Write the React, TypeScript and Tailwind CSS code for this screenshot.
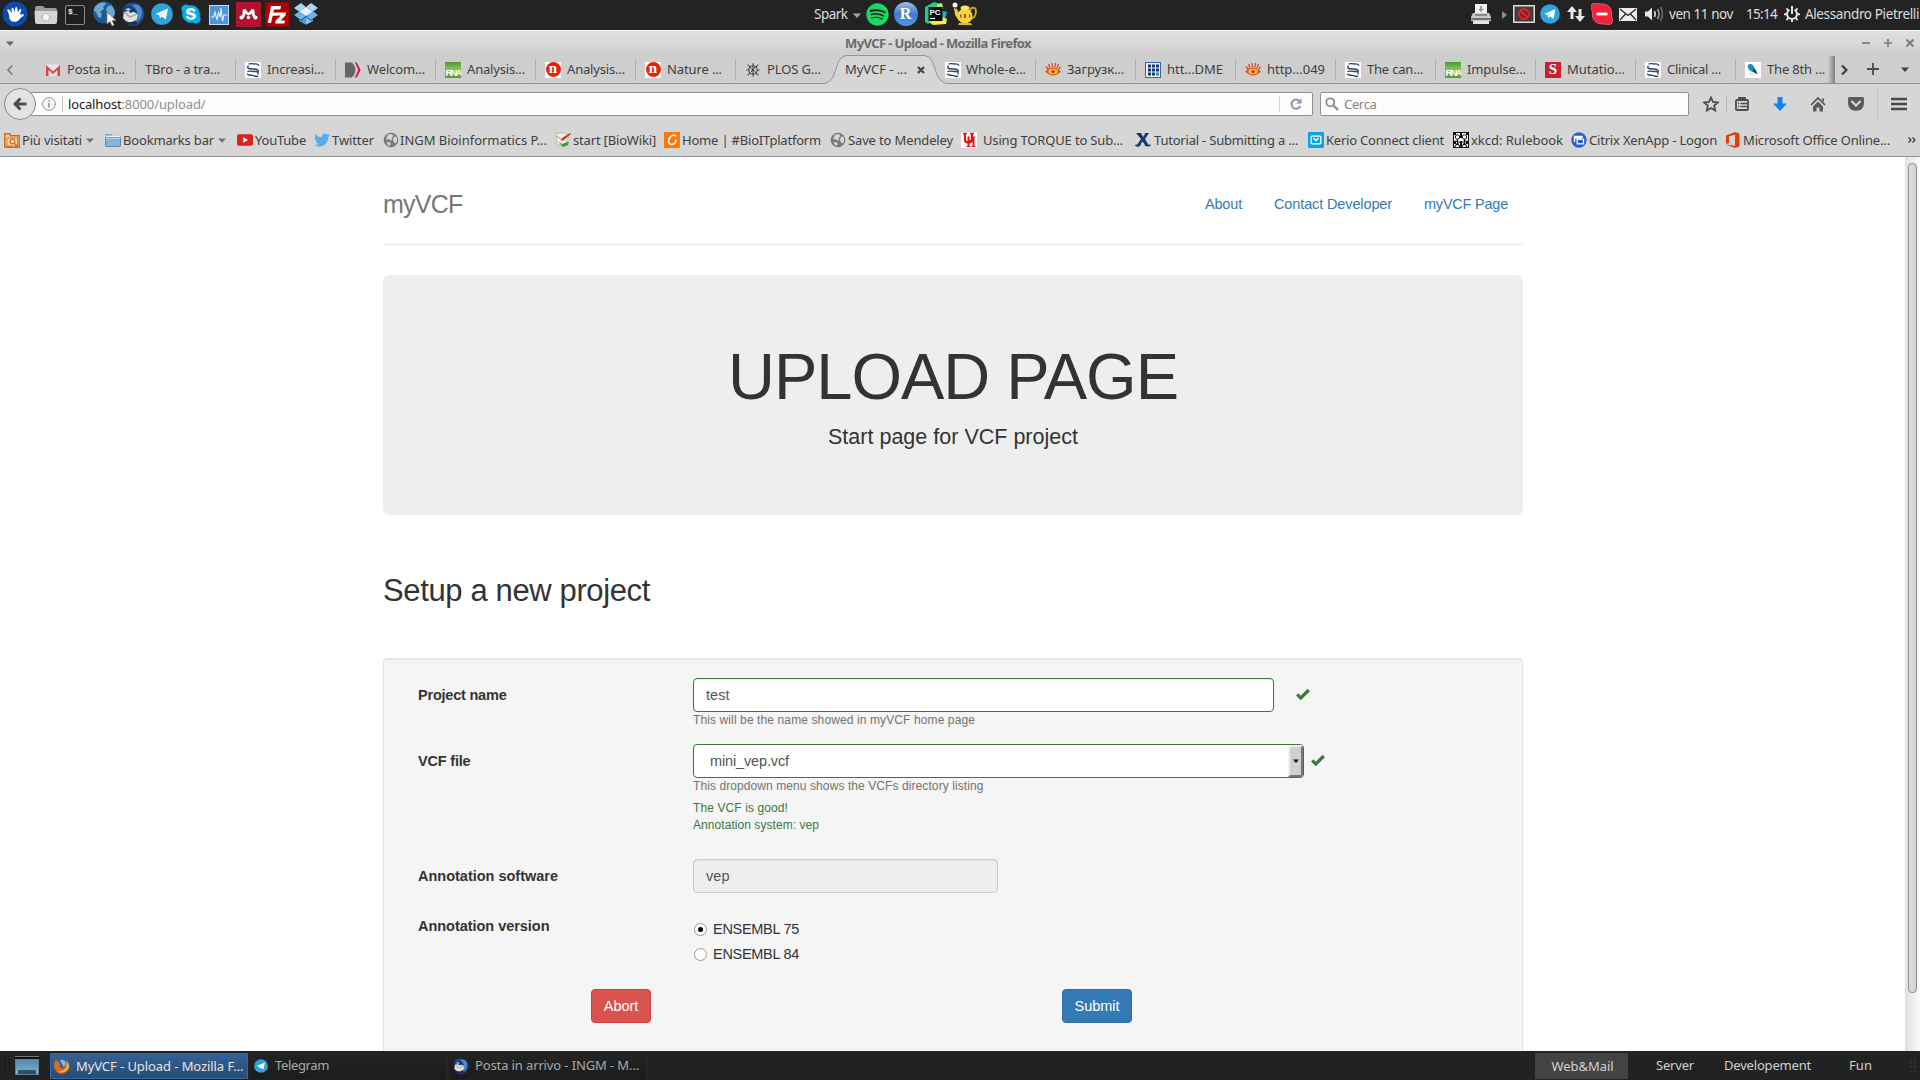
import React, { useLayoutEffect, useRef, useState } from "react";
import { FaSkype, FaSpotify, FaTwitter } from "react-icons/fa";

/** Single-line label whose tracking is adjusted so that it spans `w` pixels. */
function Fit({ w, children, className = "" }: { w: number; children: string; className?: string }) {
  const ref = useRef<HTMLSpanElement>(null);
  const [spacing, setSpacing] = useState(0);
  useLayoutEffect(() => {
    const el = ref.current;
    if (el) setSpacing((w - el.getBoundingClientRect().width) / children.length);
  }, [w, children]);
  return (
    <span ref={ref} className={"inline-block shrink-0 whitespace-pre " + className} style={{ letterSpacing: spacing }}>
      {children}
    </span>
  );
}

type IconProps = { className?: string };

const Telegram = ({ className = "size-[22px]" }: IconProps) => (
  <svg viewBox="0 0 22 22" className={className}>
    <circle cx="11" cy="11" r="10.800" fill="#2fa3dc" />
    <path d="M4.500 11 17 5.500 14.800 16.500 10.800 13.600 9 15.400 8.400 12.200z" fill="#fff" />
    <path d="M8.600 12.200 14.500 8 10 12.800z" fill="#b9dcf0" />
  </svg>
);

const Thunderbird = ({ className = "size-6" }: IconProps) => (
  <svg viewBox="0 0 24 24" className={className}>
    <path d="M2 6C6-1 18-1 22 7c3 7 0 13-6 16-5 2-10 0-13-4 1-4-3-8-1-13z" fill="#20509b" />
    <path d="M11 3c6-2 10 2 10 7s-2 8-5 10c2-6 1-12-5-17z" fill="#4d8bcc" />
    <path d="M3 10l9-2 5 5-2 7-8 1-5-5z" fill="#e4e0da" />
    <path d="M3 10l6 5 7-3" fill="none" stroke="#9a9fae" strokeWidth="1.300" />
    <path d="M1 8c2-4 7-5 10-3 3 1 5 4 5 6l-4-1-3 1-2-3-6 2z" fill="#173a78" />
    <path d="M4 7l4-1 2 2-3 1z" fill="#a8c3e2" />
    <path d="M2 17c4 4 9 4 13 1l1 4c-5 2-11 1-14-5z" fill="#13305f" />
  </svg>
);

const Firefox = () => (
  <svg viewBox="0 0 16 16" className="size-4">
    <circle cx="8.500" cy="7.500" r="6.500" fill="#2c5fa8" />
    <path d="M6 2c3-1 6 1 6 4 0 2-2 2-2 4z" fill="#7fb6e6" />
    <path d="M2 1c0 2 2 2 3 3C4 5 5 6 7 6 5 7 5 9 7 10s4 0 5-1c1-3 0-5-1-7 4 2 6 7 3 10.500S5 17 2 13 0 5 2 1z" fill="#e8681c" />
    <path d="M13 3c3 4 2 8-1 10s-6 2-8 0c4 1 7-1 8-4 1-2 1-4 1-6z" fill="#f7b23c" />
  </svg>
);

const Xubuntu = () => (
  <svg viewBox="0 0 26 26" className="size-[26px]">
    <circle cx="13" cy="13" r="12.500" fill="#0a4bb0" />
    <path d="M5.500 10c-1-1.500 1-2.500 2-1l2.500 3c0-1.500-1.200-5 .3-5.300 1.500-.4 2 3.800 2.700 4.800 0-1.300-.4-5.500 1.200-5.500s1.600 4.500 1.600 5.700c.6-1 1.700-4.300 3-3.700 1.400.7-.8 4-.8 5.500 1 .3 4-.9 4 .5 0 1.300-3 2-4.300 4-1.400 2.200-3.600 3.200-6.200 2.700-3.800-.7-4.400-3.500-4.200-6z" fill="#fff" />
  </svg>
);

const FolderHome = () => (
  <svg viewBox="0 0 24 20" className="h-5 w-6">
    <path d="M1 3q0-2 2-2h6l2 2h10q2 0 2 2v12H1z" fill="#9b9b9b" />
    <path d="M.5 6h23l-.5 11q0 2-2 2H3q-2 0-2-2z" fill="#d4d4d4" />
    <path d="M12 8l-4.500 4H9v3.500h6V12h1.500z" fill="#f7f7f7" stroke="#a5a5a5" strokeWidth=".6" />
  </svg>
);

const Terminal = () => (
  <div className="flex size-5 items-start rounded-[2px] border border-[#8b8b8b] bg-[#1e1e1e] pl-[2px] font-['Liberation_Mono'] text-[8px] leading-[12px] font-bold text-[#eee]">
    $_
  </div>
);

const Globe = () => (
  <svg viewBox="0 0 24 26" className="h-[26px] w-6">
    <circle cx="11" cy="11.500" r="11" fill="#1c5c94" />
    <path d="M4 4c3-3 8-3 9-1l-3 3 1 2-4 3 2 2-1 4-3-1-2-5-2-1c0-3 1-5 3-6zM14 6l4-2c3 3 4 6 4 9l-3 4-2-1-1-4-3-2z" fill="#6ea7cf" />
    <path d="M14 11v12l3-2.500 2 4.500 2.200-1-2-4.500h3.800z" fill="#f3f3f3" stroke="#777" strokeWidth=".6" />
  </svg>
);

const Monitor = () => (
  <svg viewBox="0 0 20 20" className="size-5">
    <rect x=".5" y=".5" width="19" height="19" fill="#4d94d8" stroke="#c5dcf3" />
    <path d="M2 12h2.500l1.500-5 2 8 1.500-7 1.500 4 1-9 1.500 13 1.500-6H18" fill="none" stroke="#e4f1ff" strokeWidth="1.100" />
  </svg>
);

const Mendeley = () => (
  <svg viewBox="0 0 25 25" className="size-[25px]">
    <rect width="25" height="25" fill="#b2122b" />
    <path d="M5.500 15.500C9 14 7.500 10 8.500 9.500S11 12 12.500 12s2.500-2.500 4-2.500-.5 4.500 3 6" fill="none" stroke="#fff" strokeWidth="2.800" strokeLinecap="round" />
    <circle cx="5.500" cy="15.500" r="2" fill="#fff" />
    <circle cx="19.500" cy="15.500" r="2" fill="#fff" />
    <circle cx="8.500" cy="9" r="2.100" fill="#fff" />
    <circle cx="16.500" cy="9" r="2.100" fill="#fff" />
    <circle cx="12.500" cy="15.500" r="1.700" fill="#fff" />
  </svg>
);

const Filezilla = () => (
  <svg viewBox="0 0 25 25" className="size-[25px]">
    <rect x=".5" y=".5" width="24" height="24" fill="#b40000" stroke="#8a0000" strokeDasharray="2 1.500" />
    <path d="M6 4h10l-.7 3.500H9l-.6 3h5l-.7 3.200h-5L6 21H2.800zM12 10.500h9l-.5 3-5 5h4.500l-.7 3h-9l.5-3 5-5h-4.400z" fill="#fff" />
  </svg>
);

const Dropbox = () => (
  <svg viewBox="0 0 24 22" className="h-[22px] w-6">
    <path d="M7 0l5 4-7 4.500L0 5zM17 0l7 5-5 3.500L12 4z" fill="#a8d4f5" />
    <path d="M0 12l5-3.500L12 13l-5 4zM24 12l-5-3.500L12 13l5 4z" fill="#6db3ec" />
    <path d="M12 4l7 4.500L12 13 5 8.500z" fill="#e7f4fd" />
    <path d="M5 16.500l2 1.300 5-4v8L5 18z" fill="#4a9be0" />
    <path d="M19 16.500l-2 1.300-5-4v8l7-3.800z" fill="#84c0ef" />
  </svg>
);

const Skype = () => (
  <span className="relative flex size-[22px] items-center justify-center">
    <span className="absolute size-[15px] rounded-full bg-white" />
    <FaSkype className="relative size-[22px] text-[#00aff0]" />
  </span>
);

const RLogo = () => (
  <div className="flex size-6 items-center justify-center rounded-full bg-linear-to-b from-[#9cc0ea] via-[#3f7cd0] to-[#4f97e8] font-['Liberation_Serif'] text-[16px] leading-none font-bold text-white">
    R
  </div>
);

const PyCharm = () => (
  <svg viewBox="0 0 24 24" className="size-6">
    <path d="M1 5l9-5 9 3-4 12-11 7-3-2z" fill="#22c98b" />
    <path d="M13 2l5-1 1 6-6 2z" fill="#c9e84d" />
    <path d="M15 8l8 2-3 10-9 2z" fill="#19b6d8" />
    <path d="M5 20l14-5 4 2-1 5-13 1z" fill="#f5ee3f" />
    <rect x="4.500" y="5" width="14" height="14" fill="#0b0b0b" />
    <text x="5.500" y="12.500" fontFamily="Liberation Sans" fontWeight="700" fontSize="8" fill="#fff">PC</text>
    <path d="M6 16.500h5" stroke="#fff" strokeWidth="1.200" />
  </svg>
);

const Teapot = () => (
  <svg viewBox="0 0 25 24" className="h-6 w-[25px]">
    <circle cx="3" cy="3" r="2.500" fill="#f4f4f4" />
    <path d="M2 6l3 1 3 6-1 6-4-6z" fill="#e9c63a" />
    <path d="M18 9c1-5 6-4 6 0s-2 7-5 8" fill="none" stroke="#d9a91d" strokeWidth="1.800" />
    <ellipse cx="13" cy="14" rx="7.500" ry="7.500" fill="#f5d63a" />
    <ellipse cx="13" cy="6" rx="4.500" ry="2.500" fill="#f9e26b" />
    <path d="M7 21h12l1 2H6z" fill="#e3b822" />
    <path d="M8 12.500h1.500v3H8zM12 12h2v4h-2zM17 12.500h1.300v3H17z" fill="#d8371d" />
  </svg>
);

const Printer = () => (
  <svg viewBox="0 0 20 20" className="size-5">
    <rect x="4" y="0" width="12" height="10" fill="#f1f1f1" />
    <path d="M9 2h2v3h2l-3 3-3-3h2z" fill="#9a9a9a" />
    <path d="M2 9h16l2 4v4H0v-4z" fill="#c9c9c9" />
    <path d="M0 14h20v2H0z" fill="#737373" />
    <path d="M2 17h16v3H2z" fill="#e6e6e6" />
    <path d="M4 11h12" stroke="#6b6b6b" strokeWidth="1.400" />
  </svg>
);

const Blocked = () => (
  <svg viewBox="0 0 22 18" className="h-[18px] w-[22px]">
    <rect x=".75" y=".75" width="20.500" height="16.500" fill="#4a3c3d" stroke="#dcdcdc" strokeWidth="1.500" />
    <circle cx="11" cy="9" r="4.900" fill="#8d1a1c" stroke="#cf2b2c" strokeWidth="2.200" />
    <path d="M7.800 6l6.400 6" stroke="#cf2b2c" strokeWidth="2" />
  </svg>
);

const Arrows = () => (
  <svg viewBox="0 0 18 18" className="size-[18px]">
    <path d="M5 1L0 7h3.500v7h3V7H10zM13 17l5-6h-3.500V4h-3v7H8z" fill="#e8e8e8" />
  </svg>
);

const SkypeBusy = () => (
  <svg viewBox="0 0 22 22" className="size-[22px]">
    <path d="M1 1c4-2 6 0 9 0 8-.5 11 5 10.500 10 0 3 2 5 .5 9-3 3-5 1-9 1C4 21 1 16 1.500 11 1.500 7-1 5 1 1z" fill="#ef233c" stroke="#f7687a" strokeWidth=".8" />
    <path d="M5.500 11h11" stroke="#fff" strokeWidth="2.800" />
  </svg>
);

const Mail = () => (
  <svg viewBox="0 0 18 13" className="h-[13px] w-[18px]">
    <rect width="18" height="13" fill="#ededed" />
    <path d="M1 1l8 6.500L17 1M1 12l5.500-6M17 12l-5.500-6" fill="none" stroke="#222" strokeWidth="1.200" />
  </svg>
);

const Volume = () => (
  <svg viewBox="0 0 19 16" className="h-4 w-[19px]">
    <path d="M0 5.500h3L7 1.500v13l-4-4H0z" fill="#e8e8e8" />
    <path d="M9.500 5q1.500 3 0 6" fill="none" stroke="#e8e8e8" strokeWidth="1.600" />
    <path d="M12.500 3q3 5 0 10" fill="none" stroke="#9d9d9d" strokeWidth="1.600" />
    <path d="M15.500 1q4 7 0 14" fill="none" stroke="#6a6a6a" strokeWidth="1.600" />
  </svg>
);

const PowerGear = () => (
  <svg viewBox="0 0 16 16" className="size-4">
    <g fill="none" stroke="#e8e8e8" strokeWidth="1.900">
      <path d="M5.500 3.700a5 5 0 1 0 5 0M8 0v8" />
      <path d="M2.500 2.500l1.600 1.600M13.500 2.500l-1.600 1.600M0 8.300h3M13 8.300h3M2.500 14l1.700-1.800M13.500 14l-1.700-1.800M8 13v3" />
    </g>
  </svg>
);

/* ---------- tab favicons ---------- */

const Gmail = () => (
  <svg viewBox="0 0 16 16" className="size-4">
    <rect x="1" y="2.500" width="14" height="11.500" fill="#e9e6e4" />
    <path d="M1 14V3l7 6.500L15 3v11h-2.500V8L8 12 3.500 8v6z" fill="#d6463a" />
  </svg>
);
const Springer = () => (
  <svg viewBox="0 0 16 16" className="size-4 bg-white">
    <g fill="none" stroke="#27406e" strokeLinecap="round">
      <path d="M4 2C6 .8 7 2.200 9.500 2s3-.5 4.300 1.200" strokeWidth="1.300" />
      <path d="M3 4.200C2 6.500 4 6.800 7 7s6-.2 6.300 2.300" strokeWidth="1.500" />
      <path d="M3 9.300c3-.6 4.500.3 7 .2s3.600.8 3 2.500" strokeWidth="1.300" />
      <path d="M2.500 12.200c1 1.600 3 .8 5 1.200s2.800 1.500 5 .9" strokeWidth="1.400" />
    </g>
  </svg>
);
const Welcome = () => (
  <svg viewBox="0 0 17 16" className="h-4 w-[17px]">
    <path d="M0 0h7q4 3 4 8t-4 8H0z" fill="#636569" />
    <path d="M10.500 0H12.500l4 8-4 8h-2l3.700-8z" fill="#d3103f" />
  </svg>
);
const Rna = () => (
  <div className="flex size-4 items-end justify-center overflow-hidden bg-linear-to-b from-[#4f9a35] via-[#8cc862] to-[#4f9a35] font-['Liberation_Sans'] text-[9.500px] leading-[10px] font-bold tracking-[-1.800px] text-white">
    RNA
  </div>
);
const NatureN = () => (
  <div className="flex size-4 items-center justify-center bg-white">
    <div className="flex size-[15px] items-center justify-center rounded-full bg-[#e2230d] pb-[2px] font-['Liberation_Serif'] text-[15px] leading-none font-bold text-white">n</div>
  </div>
);
const PlosBug = () => (
  <svg viewBox="0 0 16 16" className="size-4">
    <g stroke="#222" fill="none" strokeWidth=".9">
      <circle cx="8" cy="8" r="4.200" />
      <path d="M5.500 6l5 4M6 10l4-5M8 4v8" strokeWidth=".8" />
      <path d="M8 3.500V1M8 12.500V15M3.500 8H1M12.500 8H15M5 5L2.500 2.500M11 5l2.500-2.500M5 11l-2.500 2.500M11 11l2.500 2.500" strokeWidth="1.200" strokeDasharray="1.200 .8" />
    </g>
  </svg>
);
const EyeIcon = () => (
  <svg viewBox="0 0 16 16" className="size-4">
    <path d="M1 4.500l2.500 3M3.500 2l1.500 4M7 1l.5 4M10.500 1L10 5M13.500 2L12 6M15.500 4.500L13.500 7.500" stroke="#d8472b" strokeWidth="1.300" />
    <path d="M0 9.500q8-8 16 0-8 8-16 0z" fill="#e0542a" />
    <ellipse cx="8" cy="9.500" rx="4.600" ry="2.800" fill="#f7c52e" />
    <circle cx="8" cy="9.500" r="1.600" fill="#b5281a" />
  </svg>
);
const GridIcon = () => (
  <svg viewBox="0 0 16 16" className="size-4">
    <rect x=".5" y=".5" width="15" height="15" fill="#e9eef4" stroke="#3b62ad" />
    <path d="M3 2.500h3v3H3zM7 2.500h3v3H7zM11 2.500h3v3h-3zM3 6.500h3v3H3zM7 6.500h3v3H7zM11 6.500h3v3h-3zM3 10.500h3v3H3zM7 10.500h3v3H7z" fill="#173a70" />
    <path d="M11 10.500h3v3h-3z" fill="#1aa08d" />
  </svg>
);
const ScienceS = () => (
  <div className="flex size-4 items-center justify-center bg-[#c8202d] font-['Liberation_Serif'] text-[15px] leading-none font-bold text-white">S</div>
);
const Bird = () => (
  <svg viewBox="0 0 16 16" className="size-4 bg-white">
    <path d="M3 3c2-2 5-1 6 2l2 4-3 1C5 9 2 6 3 3z" fill="#138bc4" />
    <path d="M8 6.500l3 1.500 1.500 4.500L8 10z" fill="#0c5b53" />
    <path d="M4 11l4 2" stroke="#d5e7ef" strokeWidth="1.500" />
  </svg>
);

/* ---------- bookmark icons ---------- */

const MostVisited = () => (
  <svg viewBox="0 0 16 16" className="size-4">
    <path d="M.7 1.700h5l1.300 2h8.300v11.600H.7z" fill="#f4c48d" stroke="#d2691e" strokeWidth="1.400" />
    <rect x="3" y="6" width="10.500" height="8" fill="#fbe3c6" stroke="#d2691e" strokeWidth=".9" />
    <circle cx="8.500" cy="9.500" r="2.400" fill="none" stroke="#d2691e" strokeWidth="1.300" />
    <path d="M10 11l3 3" stroke="#d2691e" strokeWidth="1.400" />
  </svg>
);
const BlueFolder = () => (
  <svg viewBox="0 0 16 16" className="size-4">
    <path d="M.5 2h6l1 1.500h8v10H.5z" fill="#7d98ad" />
    <rect x="1" y="3.500" width="14" height="3" fill="#e9eff3" />
    <rect x=".5" y="5.500" width="15" height="9" rx=".8" fill="#86b4d6" stroke="#52789a" strokeWidth=".8" />
    <path d="M1 6.200h14" stroke="#c2dcee" />
  </svg>
);
const GreyGlobe = () => (
  <svg viewBox="0 0 16 16" className="size-4">
    <circle cx="8" cy="8" r="6.800" fill="#7d7d7d" stroke="#6e6e6e" />
    <path d="M5 2.500l4-.5 1.500 2L8.500 6l1 1.500-2 1-2-1.500-2.500.5zM11 5l2.500-.5.8 3.500-1.300 3.500-2-1-1-3zM3.500 10l4 .5-.5 3.500-2-1z" fill="#d7d7d7" />
  </svg>
);
const Wiki = () => (
  <svg viewBox="0 0 16 16" className="size-4">
    <path d="M1 1h9l4 3-5 11-7-3z" fill="#f0efdf" stroke="#a5b58b" strokeWidth=".7" />
    <path d="M15 1L7 6 6 9l3-1 7-6z" fill="#c43b2b" />
    <path d="M3 9.500l4 2.500 7-2.500-1 3.500-5 2z" fill="#3f9b3c" />
    <path d="M2 4l5 4" stroke="#d58a6a" />
  </svg>
);
const OrangeC = () => (
  <svg viewBox="0 0 16 16" className="size-4">
    <rect width="16" height="16" fill="#fd7a0a" />
    <path d="M12 4C8.500 2 4.500 5 4.500 9.500c.5 4.500 7 3.500 7.500-1.500" fill="none" stroke="#fff" strokeWidth="1.500" strokeLinecap="round" />
  </svg>
);
const UH = () => (
  <svg viewBox="0 0 16 16" className="size-4 bg-white">
    <g fill="none" stroke="#e31414">
      <path d="M4 1.500V8q0 2.500 3.500 2.500T11 8V1.500" strokeWidth="2.200" />
      <path d="M2 1.500h4M9 1.500h4" strokeWidth="1.400" />
      <path d="M7.500 4.500v10M12.500 5v9.500M7.500 9h5" strokeWidth="1.900" />
      <path d="M5.500 14.500h4M10.500 14.500h4M11.500 5h3" strokeWidth="1.200" />
    </g>
  </svg>
);
const XIcon = () => (
  <svg viewBox="0 0 16 16" className="size-4">
    <path d="M1 1h5l2.200 4L10 2l-.5-1H14l-4 6 3.500 6H10L7.500 9.500 5 13H2l4-6z" fill="#1b3768" />
    <path d="M.5 13q3 2 5-1M10 12.500q2.500 2 5.500.5" stroke="#1b3768" strokeWidth="1.700" fill="none" />
  </svg>
);
const Kerio = () => (
  <svg viewBox="0 0 16 16" className="size-4">
    <rect width="16" height="16" rx="1" fill="#0aa4e6" />
    <rect x="3.200" y="4.200" width="9.600" height="7.600" rx=".8" fill="none" stroke="#fff" strokeWidth="1.300" />
    <path d="M5.500 6L8 8.700 10.500 6" fill="none" stroke="#fff" strokeWidth="1.300" />
  </svg>
);
const Xkcd = () => (
  <svg viewBox="0 0 16 16" className="size-4">
    <rect x=".5" y=".5" width="15" height="15" fill="#fff" stroke="#111" />
    <path d="M0 0h3v3H0zM7 0h2v6H7zM13 0h3v3h-3zM7 9h2v7H7zM1 9h2v3H1zM13 9h2v3h-2z" fill="#111" />
    <circle cx="4.500" cy="5" r="2.200" fill="#fff" stroke="#111" />
    <circle cx="11.500" cy="5" r="2.200" fill="#fff" stroke="#111" />
    <path d="M4.500 7v4l-3 4M4.500 11l2.500 4M11.500 7v4l-3 4M11.500 11l2.500 4M2 9l5 1M9 10l5-1" stroke="#111" fill="none" strokeWidth="1.200" />
  </svg>
);
const Citrix = () => (
  <svg viewBox="0 0 16 16" className="size-4">
    <circle cx="8" cy="8" r="7.700" fill="#2a5ed0" />
    <path d="M3.500 10V4.500h7.500V6M3.500 6h7" fill="none" stroke="#fff" strokeWidth="1.300" />
    <rect x="6.200" y="7.200" width="6.300" height="4.600" fill="#2a5ed0" stroke="#fff" strokeWidth="1.300" />
  </svg>
);
const Office = () => (
  <svg viewBox="0 0 14 16" className="h-4 w-[14px]">
    <path d="M0 3.500L9 0l4.500 1.500v13L9 16 0 12.500l9 1.200V2.800L3 4.200v6.600l-3 1.500z" fill="#e04206" />
  </svg>
);

const YouTubeIcon = () => (
  <svg viewBox="0 0 16 16" className="size-4">
    <rect y="2.300" width="16" height="11.500" rx="2" fill="#d92323" />
    <path d="M6.300 5.300v5.400L11 8z" fill="#fff" />
  </svg>
);
const TwitterIcon = () => <FaTwitter className="size-4 text-[#55acee]" />;

const Caret = ({ className = "" }: IconProps) => (
  <svg viewBox="0 0 8 5" className={"h-[5px] w-2 " + className}>
    <path d="M0 .5h8L4 5z" fill="currentColor" />
  </svg>
);

type Tab = { icon?: React.ReactNode; text: string; w: number };

const tabsBefore: Tab[] = [
  { icon: <Springer />, text: "Increasi...", w: 57 },
  { icon: <Welcome />, text: "Welcom...", w: 58 },
  { icon: <Rna />, text: "Analysis...", w: 58 },
  { icon: <NatureN />, text: "Analysis...", w: 58 },
  { icon: <NatureN />, text: "Nature ...", w: 55 },
];
const tabsAfter: Tab[] = [
  { icon: <EyeIcon />, text: "Загрузк...", w: 57 },
  { icon: <GridIcon />, text: "htt...DME", w: 56 },
  { icon: <EyeIcon />, text: "http...049", w: 58 },
  { icon: <Springer />, text: "The can...", w: 56 },
  { icon: <Rna />, text: "Impulse...", w: 59 },
  { icon: <ScienceS />, text: "Mutatio...", w: 58 },
  { icon: <Springer />, text: "Clinical ...", w: 54 },
];

const TabItem = ({ t }: { t: Tab }) => (
  <div className="flex h-[22px] w-[100px] shrink-0 items-center border-l border-[#b0b0b0] pl-[9px]">
    {t.icon && <span className="mr-[6px] flex w-4 shrink-0">{t.icon}</span>}
    <Fit w={t.w} className="-mt-[2px]">{t.text}</Fit>
  </div>
);

const bookmarks: { box: string; gap: string; icon: React.ReactNode; text: string; w: number; menu?: boolean }[] = [
  { box: "w-[101px]", gap: "pl-[2px]", icon: <MostVisited />, text: "Più visitati", w: 60, menu: true },
  { box: "w-[132px]", gap: "pl-[2px]", icon: <BlueFolder />, text: "Bookmarks bar", w: 91, menu: true },
  { box: "w-[77px]", gap: "pl-[2px]", icon: <YouTubeIcon />, text: "YouTube", w: 51 },
  { box: "w-[69px]", gap: "pl-[2px]", icon: <TwitterIcon />, text: "Twitter", w: 42 },
  { box: "w-[172px]", gap: "pl-[1px]", icon: <GreyGlobe />, text: "INGM Bioinformatics P...", w: 147 },
  { box: "w-[109px]", gap: "pl-[2px]", icon: <Wiki />, text: "start [BioWiki]", w: 83 },
  { box: "w-[166px]", gap: "pl-[2px]", icon: <OrangeC />, text: "Home | #BioITplatform", w: 139 },
  { box: "w-[131px]", gap: "pl-[2px]", icon: <GreyGlobe />, text: "Save to Mendeley", w: 105 },
  { box: "w-[174px]", gap: "pl-[6px]", icon: <UH />, text: "Using TORQUE to Sub...", w: 140 },
  { box: "w-[173px]", gap: "pl-[3px]", icon: <XIcon />, text: "Tutorial - Submitting a ...", w: 144 },
  { box: "w-[145px]", gap: "pl-[2px]", icon: <Kerio />, text: "Kerio Connect client", w: 118 },
  { box: "w-[118px]", gap: "pl-[2px]", icon: <Xkcd />, text: "xkcd: Rulebook", w: 92 },
  { box: "w-[155px]", gap: "pl-[2px]", icon: <Citrix />, text: "Citrix XenApp - Logon", w: 128 },
  { box: "w-[181px]", gap: "pl-[3px]", icon: <Office />, text: "Microsoft Office Online...", w: 147 },
];

function TopPanel() {
  return (
    <div className="flex h-[30px] shrink-0 items-center bg-[#232323] pb-[2px] text-[13.500px] text-[#dedede]">
      <div className="flex w-[814px] items-center pl-[2px]">
        <span className="flex w-[32px]"><Xubuntu /></span>
        <span className="flex w-[31px] pt-[2px]"><FolderHome /></span>
        <span className="flex w-[28px] pt-[2px]"><Terminal /></span>
        <span className="flex w-[28px]"><Globe /></span>
        <span className="flex w-[30px]"><Thunderbird /></span>
        <span className="flex w-[29px]"><Telegram /></span>
        <span className="flex w-[29px]"><Skype /></span>
        <span className="flex w-[27px] pt-[2px]"><Monitor /></span>
        <span className="flex w-[29px]"><Mendeley /></span>
        <span className="flex w-[29px]"><Filezilla /></span>
        <Dropbox />
      </div>
      <Fit w={33.500}>Spark</Fit>
      <Caret className="mt-[3px] ml-[5px] text-[#a5a5a5]" />
      <FaSpotify className="ml-[5px] size-[23px] text-[#1ed760]" />
      <span className="ml-[5px] flex"><RLogo /></span>
      <span className="ml-[6px] flex"><PyCharm /></span>
      <span className="ml-[4px] flex"><Teapot /></span>
      <div className="ml-auto flex items-center">
        <span className="flex w-[31px]"><Printer /></span>
        <span className="flex w-[11px] pt-[2px]">
          <svg viewBox="0 0 5 8" className="h-2 w-[5px]"><path d="M0 0l5 4-5 4z" fill="#8c8c8c" /></svg>
        </span>
        <span className="flex w-[27px]"><Blocked /></span>
        <span className="flex w-[27px]"><Telegram className="size-[20px]" /></span>
        <span className="flex w-[24px]"><Arrows /></span>
        <span className="flex w-[28px]"><SkypeBusy /></span>
        <span className="flex w-[26px]"><Mail /></span>
        <span className="flex w-[24px]"><Volume /></span>
        <Fit w={64}>ven 11 nov</Fit>
        <Fit w={31} className="ml-[13px]">15:14</Fit>
        <span className="ml-[7px] flex w-[21px]"><PowerGear /></span>
        <Fit w={114} className="mr-px">Alessandro Pietrelli</Fit>
      </div>
    </div>
  );
}

function TitleBar() {
  return (
    <div className="flex h-[26px] shrink-0 items-center border-t border-[#f2f2f2] bg-linear-to-b from-[#e0e0e0] to-[#cecece] pb-[1px]">
      <Caret className="ml-[6px] text-[#666]" />
      <div className="w-[831px]" />
      <Fit w={186} className="text-[13px] font-bold text-[#6b6b6b]">MyVCF - Upload - Mozilla Firefox</Fit>
      <div className="mr-[6px] ml-auto flex items-center gap-[14px] text-[#7d7d7d]">
        <svg viewBox="0 0 8 8" className="size-2"><path d="M0 4h8" stroke="currentColor" strokeWidth="1.700" /></svg>
        <svg viewBox="0 0 8 8" className="size-2"><path d="M0 4h8M4 0v8" stroke="currentColor" strokeWidth="1.700" /></svg>
        <svg viewBox="0 0 8 8" className="size-2"><path d="M.5.5l7 7M7.500.5l-7 7" stroke="currentColor" strokeWidth="2" /></svg>
      </div>
    </div>
  );
}

function TabStrip() {
  return (
    <div className="flex h-[28px] shrink-0 items-center border-b border-[#929292] bg-[#cecece] text-[#404040]">
      <svg viewBox="0 0 6 10" className="ml-[7px] h-[10px] w-[6px]"><path d="M5.300.5L1 5l4.300 4.500" fill="none" stroke="#777" strokeWidth="1.500" /></svg>
      <div className="flex w-[122px] items-center pl-[32px]">
        <Gmail />
        <Fit w={58} className="-mt-[2px] ml-[6px]">Posta in...</Fit>
      </div>
      <div className="flex h-[22px] w-[100px] shrink-0 items-center border-l border-[#b0b0b0] pl-[9px]">
        <Fit w={75} className="-mt-[2px]">TBro - a tra...</Fit>
      </div>
      {tabsBefore.map((t, i) => <TabItem key={i} t={t} />)}
      <div className="flex h-[22px] w-[91px] shrink-0 items-center border-l border-[#b0b0b0] pl-[9px]">
        <PlosBug />
        <Fit w={54} className="-mt-[2px] ml-[6px]">PLOS G...</Fit>
      </div>
      <div className="relative flex h-[29px] w-[119px] shrink-0 items-center pl-[19px]">
        <svg viewBox="0 0 119 29" className="absolute inset-0 h-[29px] w-[119px]">
          <path d="M-3 29V28.500C14 28.500 6 .5 22 .5H97C113 .5 105 28.500 122 28.500V29z" fill="#d6d6d6" />
          <path d="M-3 28C14 28 6 .5 22 .5H97C113 .5 105 28 122 28" fill="none" stroke="#929292" />
        </svg>
        <Fit w={62} className="relative -mt-[2px]">MyVCF - ...</Fit>
        <svg viewBox="0 0 8 8" className="relative ml-[10px] size-2"><path d="M1 1l6 6M7 1L1 7" stroke="#4a4a4a" strokeWidth="2.300" /></svg>
      </div>
      <div className="flex h-[22px] w-[90px] shrink-0 items-center">
        <Springer />
        <Fit w={60} className="-mt-[2px] ml-[5px]">Whole-e...</Fit>
      </div>
      {tabsAfter.map((t, i) => <TabItem key={i} t={t} />)}
      <div className="flex h-[22px] w-[93px] shrink-0 items-center border-l border-[#b0b0b0] pl-[9px]">
        <Bird />
        <Fit w={58} className="-mt-[2px] ml-[6px]">The 8th ...</Fit>
      </div>
      <div className="h-[27px] w-[7px] shrink-0 bg-linear-to-r from-[#cecece] to-[#7f7f7f]" />
      <svg viewBox="0 0 7 10" className="ml-[6px] h-[10px] w-[7px]"><path d="M1 .5L5.500 5 1 9.500" fill="none" stroke="#3c3c3c" strokeWidth="2.200" /></svg>
      <svg viewBox="0 0 12 12" className="-mt-px ml-[19px] size-3"><path d="M6 0v12M0 6h12" stroke="#4a4a4a" strokeWidth="1.800" /></svg>
      <Caret className="ml-[22px] text-[#3c4043]" />
    </div>
  );
}

function NavBar() {
  return (
    <div className="flex h-[40px] shrink-0 items-center bg-[#d6d6d6] text-[#404040]">
      <div className="z-10 ml-[4px] flex size-8 items-center justify-center rounded-full border border-[#8a8a8a] bg-[#e2e2e2]">
        <svg viewBox="0 0 14 14" className="size-[14px]"><path d="M13.500 7H2.500M7.500 1.500L2 7l5.500 5.500" fill="none" stroke="#4d4d4d" strokeWidth="3" /></svg>
      </div>
      <div className="-ml-[6px] flex h-6 w-[1283px] items-center rounded-r-[2px] border border-[#8f8f8f] bg-[#fcfcfc] pl-[11px]">
        <svg viewBox="0 0 14 14" className="size-[14px]">
          <circle cx="7" cy="7" r="6.300" fill="none" stroke="#8c8c8c" />
          <path d="M7 6v4.500M7 3.300v1.500" stroke="#8c8c8c" strokeWidth="1.500" />
        </svg>
        <span className="ml-[6px] h-4 w-px bg-[#c4c4c4]" />
        <Fit w={53.500} className="ml-[5px] text-[#222]">localhost</Fit>
        <Fit w={84} className="text-[#8f8f8f]">:8000/upload/</Fit>
        <span className="ml-auto h-4 w-px bg-[#d2d2d2]" />
        <svg viewBox="0 0 12 12" className="mr-[10px] ml-[10px] size-3">
          <path d="M9.800 3.500A4.600 4.600 0 1 0 10.300 8" fill="none" stroke="#8898a8" strokeWidth="2" />
          <path d="M11.500 0v5.500H6z" fill="#8898a8" />
        </svg>
      </div>
      <div className="ml-[7px] flex h-6 w-[369px] items-center rounded-[2px] border border-[#8f8f8f] bg-[#fcfcfc] pl-[4px]">
        <svg viewBox="0 0 14 14" className="size-[14px]">
          <circle cx="5.300" cy="5.300" r="4" fill="none" stroke="#8f8f8f" strokeWidth="1.800" />
          <path d="M8.500 8.500l4.500 4.500" stroke="#8f8f8f" strokeWidth="2.400" />
        </svg>
        <Fit w={32.500} className="ml-[5px] text-[#858585]">Cerca</Fit>
      </div>
      <svg viewBox="0 0 16 16" className="ml-[14px] size-4">
        <path d="M8 1.500l2 4.500 4.800.5-3.600 3.200 1 4.800L8 12l-4.200 2.500 1-4.800L1.200 6.500 6 6z" fill="none" stroke="#4d4d4d" strokeWidth="1.800" />
      </svg>
      <span className="ml-[7px] h-[18px] w-px bg-[#b5b5b5]" />
      <svg viewBox="0 0 14 14" className="ml-[8px] size-[14px]">
        <path d="M4 3V1h6v2" fill="none" stroke="#4d4d4d" strokeWidth="1.800" />
        <rect x="1" y="3" width="12" height="10" rx="1" fill="none" stroke="#4d4d4d" strokeWidth="1.800" />
        <path d="M3 6.500h1.300M5.500 6.500H12M3 9.500h1.300M5.500 9.500H12" stroke="#4d4d4d" strokeWidth="1.400" />
      </svg>
      <svg viewBox="0 0 14 14" className="ml-[24px] size-[14px]"><path d="M4.500 0h5v6.500H14L7 14 0 6.500h4.500z" fill="#1483f2" /></svg>
      <svg viewBox="0 0 16 15" className="ml-[23px] h-[15px] w-4">
        <path d="M1 8l7-7 7 7" fill="none" stroke="#4d4d4d" strokeWidth="1.600" />
        <path d="M3 9.500L8 4.500l5 5v5H9.500v-4h-3v4H3zM12 1.500h2V5l-2-2z" fill="#5a5a5a" />
      </svg>
      <svg viewBox="0 0 16 14" className="ml-[22px] h-[14px] w-4">
        <path d="M0 1.500Q0 0 1.500 0h13Q16 0 16 1.500V6q0 7.500-8 7.800Q0 13.500 0 6z" fill="#5a5a5a" />
        <path d="M4 4.500l4 4 4-4" fill="none" stroke="#dcdcdc" strokeWidth="2" strokeLinecap="round" />
      </svg>
      <span className="ml-[13px] h-[32px] w-px bg-[#c2c2c2]" />
      <svg viewBox="0 0 16 14" className="ml-[13px] h-[14px] w-4"><path d="M0 2h16M0 7h16M0 12h16" stroke="#4a4a4a" strokeWidth="2.600" /></svg>
    </div>
  );
}

function BookmarksBar() {
  return (
    <div className="flex h-[33px] shrink-0 items-center border-b border-[#929292] bg-[#d6d6d6] pl-[4px] text-[#404040]">
      {bookmarks.map((b) => (
        <div key={b.text} className={"flex shrink-0 items-center " + b.box}>
          {b.icon}
          <span className={"flex " + b.gap}><Fit w={b.w}>{b.text}</Fit></span>
          {b.menu && <Caret className="ml-[4px] text-[#777]" />}
        </div>
      ))}
      <svg viewBox="0 0 8 6" className="ml-[1px] h-[6px] w-2"><path d="M.5.5L3 3 .5 5.500M4.500.5L7 3 4.500 5.500" fill="none" stroke="#333" strokeWidth="1.200" /></svg>
    </div>
  );
}

const Check = () => (
  <svg viewBox="0 0 14 12" className="-mt-[2px] h-3 w-[14px]"><path d="M1.200 6.300l3.600 3.700L12.800 2" fill="none" stroke="#3c763d" strokeWidth="3.200" /></svg>
);

const Label = ({ children }: { children: React.ReactNode }) => (
  <div className="w-[275px] shrink-0 pt-[7px] leading-5 font-bold">{children}</div>
);

const Radio = ({ checked, children }: { checked?: boolean; children: string }) => (
  <label className="flex h-[25px] items-center">
    <span className="mt-[2px] mr-[6px] ml-[1px] flex size-[13px] items-center justify-center rounded-full border border-[#999] bg-white">
      {checked && <span className="size-[5px] rounded-full bg-black" />}
    </span>
    <Fit w={86}>{children}</Fit>
  </label>
);

function Page() {
  return (
    <div className="flex min-h-0 flex-1 overflow-hidden bg-white font-['Liberation_Sans',Arial,sans-serif] text-[14.500px] text-[#333]">
      <div className="w-[1905px] shrink-0">
        <div className="ml-[383px] w-[1140px]">
          <header className="flex h-[88px] items-center border-b border-[#e5e5e5] pt-[7px]">
            <Fit w={79.500} className="text-[25px] leading-[40px] text-[#777]">myVCF</Fit>
            <nav className="ml-auto flex gap-[32px] pr-[15px] text-[#337ab7]">
              <Fit w={37}>About</Fit>
              <Fit w={118}>Contact Developer</Fit>
              <Fit w={84}>myVCF Page</Fit>
            </nav>
          </header>
          <section className="mt-[30px] flex h-[240px] flex-col items-center rounded-[6px] bg-[#eee] pt-[67px]">
            <h1 className="h-[69px]"><Fit w={450} className="text-[65px] leading-[69px]">UPLOAD PAGE</Fit></h1>
            <p className="mt-[11px]"><Fit w={250} className="text-[21.500px] leading-[30px]">Start page for VCF project</Fit></p>
          </section>
          <h2 className="mt-[59px] h-[33px] leading-[33px]"><Fit w={267} className="text-[31px]">Setup a new project</Fit></h2>
          <section className="mt-[51px] h-[420px] rounded-t-[4px] border border-[#e3e3e3] bg-[#f5f5f5] px-[34px] pt-[19px] shadow-[inset_0_1px_1px_rgba(0,0,0,0.05)]">
            <div className="flex h-[66px]">
              <Label><Fit w={88.500}>Project name</Fit></Label>
              <div>
                <div className="flex items-center">
                  <div className="flex h-[34px] w-[581px] items-center rounded-[4px] border border-[#3c763d] bg-white px-3 text-[#555] shadow-[inset_0_1px_1px_rgba(0,0,0,0.075)]">
                    <Fit w={23.500}>test</Fit>
                  </div>
                  <span className="ml-[22px] flex"><Check /></span>
                </div>
                <div className="h-[17px] text-[12px] leading-[17px] text-[#737373]"><Fit w={282}>This will be the name showed in myVCF home page</Fit></div>
              </div>
            </div>
            <div className="flex h-[115px]">
              <Label><Fit w={52.500}>VCF file</Fit></Label>
              <div>
                <div className="flex items-center">
                  <div className="flex h-[34px] w-[611px] items-center justify-between overflow-hidden rounded-[4px] border border-[#3c763d] bg-white pl-[16px] text-[#555]">
                    <Fit w={79}>mini_vep.vcf</Fit>
                    <span className="flex h-full w-[15px] items-center justify-center border-2 border-t-[#f0f0f0] border-r-[#777] border-b-[#777] border-l-[#f0f0f0] bg-[#d0d0d0]">
                      <svg viewBox="0 0 6 4" className="h-1 w-[6px]"><path d="M0 .5h6L3 4z" fill="#000" /></svg>
                    </span>
                  </div>
                  <span className="ml-[7px] flex"><Check /></span>
                </div>
                <div className="text-[12px] leading-[17px]">
                  <div className="mb-[5px] flex text-[#737373]"><Fit w={290.500}>This dropdown menu shows the VCFs directory listing</Fit></div>
                  <div className="flex text-[#3c763d]"><Fit w={95}>The VCF is good!</Fit></div>
                  <div className="flex text-[#3c763d]"><Fit w={126}>Annotation system: vep</Fit></div>
                </div>
              </div>
            </div>
            <div className="flex h-[56px]">
              <Label><Fit w={140}>Annotation software</Fit></Label>
              <div className="flex h-[34px] w-[305px] items-center rounded-[4px] border border-[#ccc] bg-[#eee] px-3 text-[#555] shadow-[inset_0_1px_1px_rgba(0,0,0,0.075)]">
                <Fit w={23.500}>vep</Fit>
              </div>
            </div>
            <div className="flex h-[74px]">
              <div className="-mt-[6px]"><Label><Fit w={131.500}>Annotation version</Fit></Label></div>
              <div className="pt-[1px]">
                <Radio checked>ENSEMBL 75</Radio>
                <Radio>ENSEMBL 84</Radio>
              </div>
            </div>
            <div className="flex pl-[173px]">
              <div className="flex h-[34px] w-[60px] items-center justify-center rounded-[4px] border border-[#d43f3a] bg-[#d9534f] text-white"><Fit w={34.500}>Abort</Fit></div>
              <div className="ml-[411px] flex h-[34px] w-[70px] items-center justify-center rounded-[4px] border border-[#2e6da4] bg-[#337ab7] text-white"><Fit w={45}>Submit</Fit></div>
            </div>
          </section>
        </div>
      </div>
      <div className="w-[15px] shrink-0 bg-linear-to-r from-[#e0e0e0] to-[#fbfbfb] pt-[6px] pl-[3px]">
        <div className="h-[830px] w-[9px] rounded-[4px] border border-[#8f8f8f] bg-linear-to-r from-[#dedede] to-[#d0d0d0]" />
      </div>
    </div>
  );
}

function Taskbar() {
  return (
    <div className="flex h-[29px] shrink-0 items-center bg-[#222] text-[13px] text-[#a9a9a9]">
      <span className="ml-[4px] grid h-[14px] w-[6px] grid-cols-2 gap-px opacity-40">
        {Array.from({ length: 8 }, (_, i) => <span key={i} className="size-[2px] bg-[#0a0a0a]" />)}
      </span>
      <svg viewBox="0 0 24 19" className="ml-[5px] h-[19px] w-6">
        <defs><linearGradient id="desk" x2="0" y2="1"><stop stopColor="#4b7fa6" /><stop offset="1" stopColor="#7db2d3" /></linearGradient></defs>
        <rect x=".5" y=".5" width="23" height="18" fill="url(#desk)" stroke="#5c7f99" />
        <rect width="24" height="3" fill="#0f0f0f" />
        <rect y="0" width="24" height="1" fill="#777" />
        <path d="M3 18v-3q0-1 1-1h16q1 0 1 1v3z" fill="#344e61" />
      </svg>
      <div className="ml-[11px] flex h-[26px] w-[198px] items-center border border-[#3269a3] bg-linear-to-b from-[#336294] to-[#284c74] pl-[3px] text-[#e6e6e6]">
        <Firefox /><Fit w={167.500} className="ml-[6px]">MyVCF - Upload - Mozilla F...</Fit>
      </div>
      <div className="ml-[2px] flex h-[26px] w-[197px] items-center border-r border-[#2c2c2c] bg-linear-to-b from-[#232323] to-[#1c1c1c] pl-[4px]">
        <Telegram className="size-[14px]" /><Fit w={54} className="-mt-px ml-[7px]">Telegram</Fit>
      </div>
      <div className="ml-[3px] flex h-[26px] w-[197px] items-center border-r border-[#2c2c2c] bg-linear-to-b from-[#232323] to-[#1c1c1c] pl-[3px]">
        <Thunderbird className="size-4" /><Fit w={164} className="-mt-px ml-[6px]">Posta in arrivo - INGM - M...</Fit>
      </div>
      <div className="ml-auto flex items-center text-[#d0d0d0]">
        <div className="flex h-[26px] w-[93px] items-center justify-center bg-[#434343] pl-[2px]"><Fit w={62}>Web&Mail</Fit></div>
        <Fit w={38} className="-mt-px ml-[28px]">Server</Fit>
        <Fit w={87} className="-mt-px ml-[30px]">Developement</Fit>
        <Fit w={23} className="-mt-px ml-[38px]">Fun</Fit>
        <span className="mr-[4px] ml-[38px] grid h-[14px] w-[6px] grid-cols-2 gap-px opacity-60">
          {Array.from({ length: 8 }, (_, i) => <span key={i} className="size-[2px] bg-[#3a3a3a]" />)}
        </span>
      </div>
    </div>
  );
}

export default function App() {
  return (
    <div className="flex h-[1080px] w-[1920px] flex-col overflow-hidden bg-white font-['Noto_Sans','Open_Sans',sans-serif] text-[13px] leading-[18px]">
      <TopPanel />
      <TitleBar />
      <TabStrip />
      <NavBar />
      <BookmarksBar />
      <Page />
      <Taskbar />
    </div>
  );
}
